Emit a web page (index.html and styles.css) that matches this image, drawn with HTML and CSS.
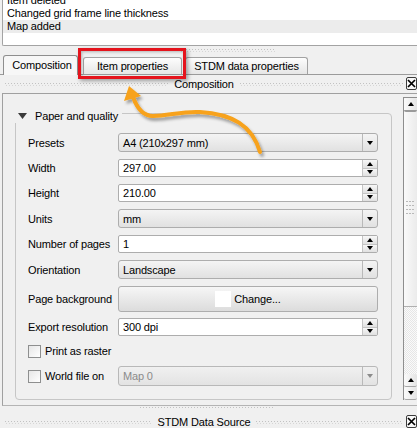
FILE: index.html
```html
<!DOCTYPE html>
<html>
<head>
<meta charset="utf-8">
<link rel="stylesheet" href="styles.css">
</head>
<body>
<div class="history">
  <div class="hl">Item deleted</div>
  <div class="hl">Changed grid frame line thickness</div>
  <div class="hl sel">Map added</div>
</div>

<div class="tabstrip">
  <div class="grip topgrip"></div>
  <div class="tabs">
    <div class="tab active">Composition</div>
    <div class="tab t2">Item properties</div>
    <div class="tab t3">STDM data properties</div>
  </div>
</div>

<div class="titlebar">
  <div class="grip"></div>
  <span class="ttl">Composition</span>
  <div class="grip"></div>
  <div class="close"><svg width="9" height="9" viewBox="0 0 9 9"><path d="M1 1L8 8M8 1L1 8" stroke="#000" stroke-width="1.7"/></svg></div>
</div>

<div class="dock">
  <div class="content">
    <div class="group">
      <div class="gtitle"><svg class="tri" width="9" height="6" viewBox="0 0 9 6"><path d="M0 0H9L4.5 6Z" fill="#3a3a3a"/></svg><span>Paper and quality</span></div>

      <div class="row">
        <span class="lbl">Presets</span>
        <div class="combo"><span class="val">A4 (210x297 mm)</span><span class="drop"><i class="dn"></i></span></div>
      </div>
      <div class="row">
        <span class="lbl">Width</span>
        <div class="spin"><span class="val">297.00</span><span class="btns"><span class="sb"><i class="up"></i></span><span class="sb"><i class="dn"></i></span></span></div>
      </div>
      <div class="row">
        <span class="lbl">Height</span>
        <div class="spin"><span class="val">210.00</span><span class="btns"><span class="sb"><i class="up"></i></span><span class="sb"><i class="dn"></i></span></span></div>
      </div>
      <div class="row">
        <span class="lbl">Units</span>
        <div class="combo"><span class="val">mm</span><span class="drop"><i class="dn"></i></span></div>
      </div>
      <div class="row">
        <span class="lbl">Number of pages</span>
        <div class="spin"><span class="val">1</span><span class="btns"><span class="sb"><i class="up"></i></span><span class="sb"><i class="dn"></i></span></span></div>
      </div>
      <div class="row">
        <span class="lbl">Orientation</span>
        <div class="combo"><span class="val">Landscape</span><span class="drop"><i class="dn"></i></span></div>
      </div>
      <div class="row tight">
        <span class="lbl">Page background</span>
        <div class="btn"><span class="swatch"></span><span>Change...</span></div>
      </div>
      <div class="row tight">
        <span class="lbl">Export resolution</span>
        <div class="spin"><span class="val">300 dpi</span><span class="btns"><span class="sb"><i class="up"></i></span><span class="sb"><i class="dn"></i></span></span></div>
      </div>
      <div class="row tight chkrow">
        <span class="check"></span><span>Print as raster</span>
      </div>
      <div class="row worldrow">
        <span class="lbl lblchk"><span class="check"></span><span>World file on</span></span>
        <div class="combo disabled"><span class="val">Map 0</span><span class="drop"><i class="dn"></i></span></div>
      </div>
    </div>
  </div>
  <div class="vscroll">
    <div class="sbtn first"><i class="up"></i></div>
    <div class="handle"><span class="hgrip"></span></div>
    <div class="track"></div>
    <div class="sbtn"><i class="up"></i></div>
    <div class="sbtn"><i class="dn"></i></div>
  </div>
</div>

<div class="bottomarea">
  <div class="grip botgrip"></div>
  <div class="titlebar lower">
    <div class="grip"></div>
    <span class="ttl">STDM Data Source</span>
    <div class="grip"></div>
    <div class="close"><svg width="9" height="9" viewBox="0 0 9 9"><path d="M1 1L8 8M8 1L1 8" stroke="#000" stroke-width="1.7"/></svg></div>
  </div>
</div>

<div class="highlight"></div>

<svg class="arrow" width="417" height="428" viewBox="0 0 417 428">
  <defs>
    <filter id="sh" x="-20%" y="-20%" width="140%" height="140%">
      <feGaussianBlur in="SourceAlpha" stdDeviation="1.4"/>
      <feOffset dx="2" dy="3" result="o"/>
      <feComponentTransfer><feFuncA type="linear" slope="0.35"/></feComponentTransfer>
      <feMerge><feMergeNode/><feMergeNode in="SourceGraphic"/></feMerge>
    </filter>
  </defs>
  <g filter="url(#sh)">
    <path d="M133 97 C137 108 143 116 153 116 C168 116 182 111 200 112 C232 114 252 125 260 152" fill="none" stroke="#f7a21b" stroke-width="4" stroke-linecap="round"/>
    <path d="M129 86 L124 101 L141 96 Z" fill="#f7a21b"/>
  </g>
</svg>
</body>
</html>
```

FILE: styles.css
```css
* { box-sizing: border-box; margin: 0; padding: 0; }
html, body { width: 417px; height: 428px; overflow: hidden; }
body {
  background: #f0f0f0;
  font-family: "Liberation Sans", Arial, sans-serif;
  font-size: 11px;
  letter-spacing: -0.15px;
  color: #000;
  position: relative;
}

/* history list */
.history {
  height: 46px;
  margin-left: 2px;
  background: #fff;
  border-left: 1px solid #a3a3a3;
  border-bottom: 1px solid #a3a3a3;
  border-bottom-left-radius: 2px;
  overflow: hidden;
}
.hl { height: 13px; line-height: 13px; padding-left: 4px; white-space: nowrap; }
.hl:first-child { margin-top: -6px; }
.hl.sel { background: #ececec; }

/* grip dots */
.grip {
  height: 3px;
  background-image:
    repeating-linear-gradient(90deg, #c2c2c2 0 1px, transparent 1px 3px),
    repeating-linear-gradient(90deg, transparent 0 1px, #d6d6d6 1px 2px, transparent 2px 3px);
  background-size: 100% 1px, 100% 1px;
  background-position: 0 0, 0 2px;
  background-repeat: no-repeat;
}

/* tabs */
.tabstrip { height: 29px; padding-top: 3px; }
.topgrip { width: 95px; margin-left: 180px; }
.tabs {
  margin-top: 3px;
  height: 20px;
  display: flex;
  align-items: flex-end;
  padding-left: 3px;
  border-bottom: 1px solid #9b9b9b;
}
.tab {
  height: 17px;
  border: 1px solid #a2a2a2;
  border-bottom: none;
  border-radius: 3px 3px 0 0;
  background: linear-gradient(#fdfdfd, #e6e6e6);
  display: flex;
  align-items: center;
  justify-content: center;
  white-space: nowrap;
}
.tab.active {
  width: 75px;
  height: 20px;
  margin-bottom: -1px;
  margin-right: 5px;
  background: #f7f7f7;
  border-color: #8e8e8e;
  padding-left: 3px;
  padding-bottom: 1px;
}
.tab.t2 { width: 99px; margin-right: 3px; }
.tab.t3 { width: 123px; }

/* dock title bars */
.titlebar {
  height: 18px;
  display: flex;
  align-items: center;
  padding-left: 5px;
}
.titlebar .grip { flex: 1; }
.ttl { padding: 0 6px; white-space: nowrap; }
.close {
  width: 11px;
  height: 13px;
  margin-left: 3px;
  align-self: flex-start;
  margin-top: 2px;
  border: 1px solid #3c3c3c;
  border-radius: 2px;
  background: #f8f8f8;
  display: flex;
  align-items: center;
  justify-content: center;
}

/* dock frame */
.dock {
  height: 313px;
  margin-left: 2px;
  border-left: 1px solid #a0a0a0;
  border-top: 1px solid #a0a0a0;
  border-bottom: 1px solid #b4b4b4;
  display: flex;
}
.content { flex: 1; padding: 19px 11px 0 12px; }
.group {
  height: 287px;
  border: 1px solid #c6c6c6;
  border-radius: 4px;
  padding: 0 13px 0 12px;
}
.gtitle {
  display: flex;
  align-items: center;
  width: fit-content;
  height: 14px;
  margin: -5px 0 10px -13px;
  padding: 0 4px 0 3px;
  background: #f0f0f0;
}
.gtitle .tri { margin-right: 8px; }

.row { display: flex; align-items: center; margin-bottom: 7px; }
.row.tight { margin-bottom: 6px; }
.lbl { width: 90px; flex: none; white-space: nowrap; }
.lblchk { display: flex; align-items: center; }

.combo {
  flex: 1;
  height: 19px;
  border: 1px solid #adadad;
  border-radius: 3px;
  background: linear-gradient(#f4f4f4, #e1e1e1);
  display: flex;
  align-items: center;
}
.val { flex: 1; padding-left: 4px; white-space: nowrap; }
.drop {
  width: 15px;
  height: 100%;
  border-left: 1px solid #b9b9b9;
  display: flex;
  align-items: center;
  justify-content: center;
}
.combo.disabled { height: 20px; background: linear-gradient(#f0f0f0, #e3e3e3); border-color: #b8b8b8; color: #8b8b8b; }
.combo.disabled .dn { border-top-color: #8b8b8b; }

.spin {
  flex: 1;
  height: 18px;
  border: 1px solid #adadad;
  border-radius: 2px;
  background: #fff;
  display: flex;
  align-items: center;
}
.btns {
  width: 15px;
  height: 100%;
  display: flex;
  flex-direction: column;
  border-left: 1px solid #c4c4c4;
}
.sb {
  flex: 1;
  background: linear-gradient(#f7f7f7, #e0e0e0);
  display: flex;
  align-items: center;
  justify-content: center;
}
.sb + .sb { border-top: 1px solid #c4c4c4; }

i.up, i.dn {
  display: block;
  width: 1px;
  height: 0;
  border-left: 3px solid transparent;
  border-right: 3px solid transparent;
}
i.up { border-bottom: 4px solid #000; }
i.dn { border-top: 4px solid #000; }

.btn {
  flex: 1;
  height: 26px;
  border: 1px solid #adadad;
  border-radius: 3px;
  background: linear-gradient(#f6f6f6, #dcdcdc);
  display: flex;
  align-items: center;
  justify-content: center;
}
.swatch { width: 16px; height: 16px; background: #fff; margin-right: 3px; }

.check {
  width: 13px;
  height: 13px;
  flex: none;
  border: 1px solid #8e8f8f;
  background: linear-gradient(135deg, #e6e6e6, #ffffff);
  margin-right: 4px;
}
.chkrow { height: 18px; }
.worldrow { margin-bottom: 0; }

/* scrollbar */
.vscroll {
  width: 14px;
  margin: 3px 0 5px 0;
  display: flex;
  flex-direction: column;
  border-left: 1px solid #8e8e8e;
  border-top: 1px solid #8e8e8e;
}
.sbtn {
  height: 13px;
  flex: none;
  border-bottom: 1px solid #a8a8a8;
  border-radius: 2px;
  background: linear-gradient(90deg, #fbfbfb, #e4e4e4);
  display: flex;
  align-items: center;
  justify-content: center;
}
.sbtn.first { height: 14px; border-bottom: 2px solid #9a9a9a; }
.handle {
  height: 195px;
  flex: none;
  background: linear-gradient(90deg, #fafafa, #ebebeb);
  border-bottom: 1px solid #b0b0b0;
  display: flex;
  align-items: center;
  justify-content: center;
}
.hgrip {
  width: 9px;
  height: 16px;
  background-image: repeating-linear-gradient(90deg, #b9b9b9 0 2px, transparent 2px 3px);
  -webkit-mask-image: repeating-linear-gradient(#000 0 1px, transparent 1px 4px);
  mask-image: repeating-linear-gradient(#000 0 1px, transparent 1px 4px);
}
.track {
  flex: 1;
  background-color: #fafafa;
  background-image: conic-gradient(#e6e6e6 25%, transparent 0 50%, #e6e6e6 0 75%, transparent 0);
  background-size: 2px 2px;
}

/* bottom dock title */
.bottomarea { height: 22px; padding-top: 1px; }
.botgrip { width: 135px; height: 2px; margin-left: 140px; }
.titlebar.lower { height: 16px; margin-top: 5px; }
.titlebar.lower .close { margin-top: 1px; }

/* annotations */
.highlight {
  position: absolute;
  left: 78px;
  top: 48px;
  width: 108px;
  height: 31px;
  border: 3px solid #e5131c;
  box-shadow: 2px 2px 4px rgba(0,0,0,0.35), inset 1px 1px 3px rgba(0,0,0,0.25);
}
.arrow { position: absolute; left: 0; top: 0; pointer-events: none; }
```
